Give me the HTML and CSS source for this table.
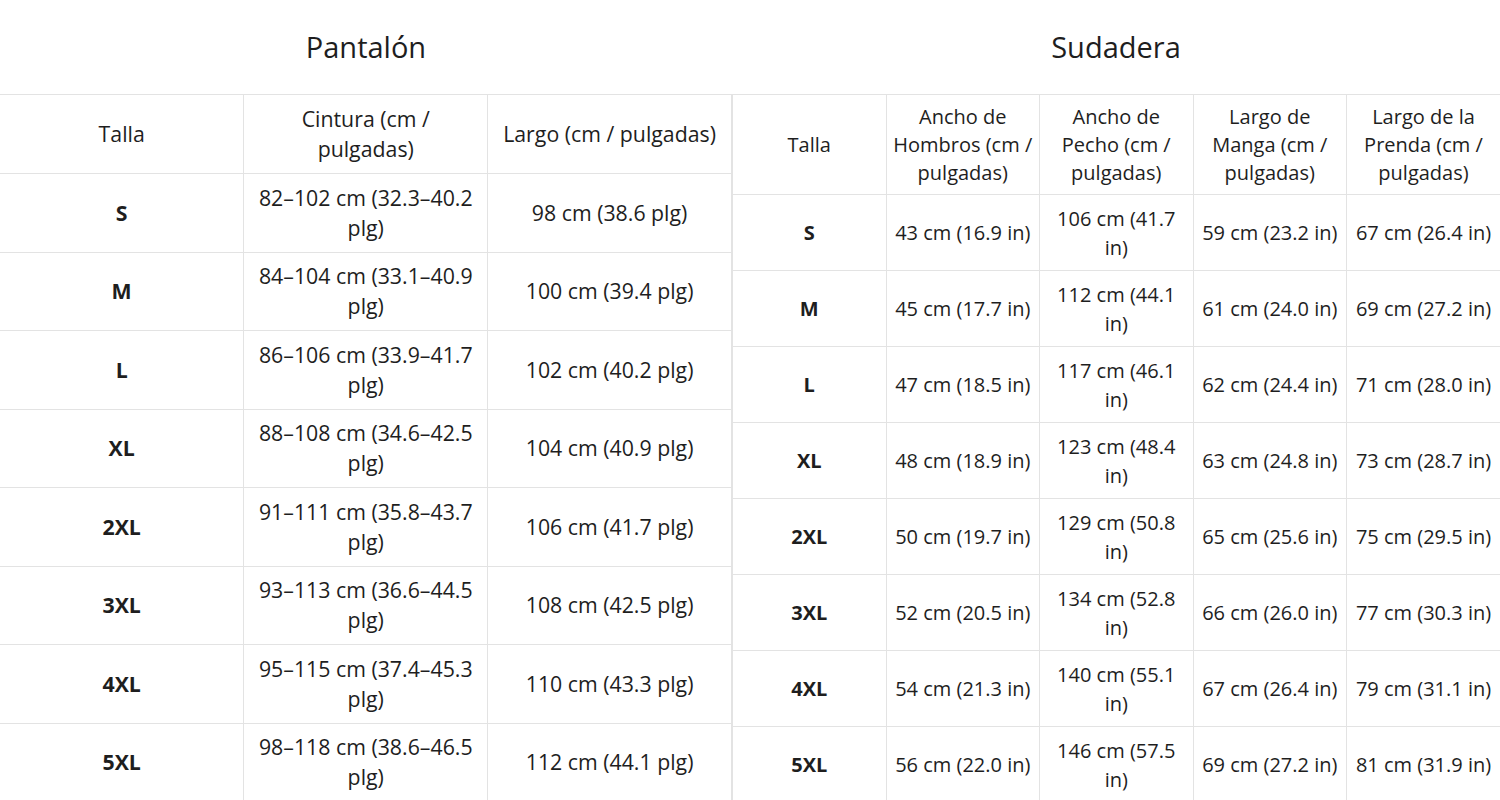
FILE: index.html
```html
<!DOCTYPE html>
<html lang="es">
<head>
<meta charset="utf-8">
<link rel="stylesheet" href="styles.css">
</head>
<body>
<div class="wrap">
  <section class="block block-left">
    <h2 class="title">Pantalón</h2>
    <table class="chart chart-left">
      <thead>
        <tr><th>Talla</th><th>Cintura (cm / pulgadas)</th><th>Largo (cm / pulgadas)</th></tr>
      </thead>
      <tbody>
        <tr><td class="size">S</td><td>82–102 cm (32.3–40.2 plg)</td><td>98 cm (38.6 plg)</td></tr>
        <tr><td class="size">M</td><td>84–104 cm (33.1–40.9 plg)</td><td>100 cm (39.4 plg)</td></tr>
        <tr><td class="size">L</td><td>86–106 cm (33.9–41.7 plg)</td><td>102 cm (40.2 plg)</td></tr>
        <tr><td class="size">XL</td><td>88–108 cm (34.6–42.5 plg)</td><td>104 cm (40.9 plg)</td></tr>
        <tr><td class="size">2XL</td><td>91–111 cm (35.8–43.7 plg)</td><td>106 cm (41.7 plg)</td></tr>
        <tr><td class="size">3XL</td><td>93–113 cm (36.6–44.5 plg)</td><td>108 cm (42.5 plg)</td></tr>
        <tr><td class="size">4XL</td><td>95–115 cm (37.4–45.3 plg)</td><td>110 cm (43.3 plg)</td></tr>
        <tr><td class="size">5XL</td><td>98–118 cm (38.6–46.5 plg)</td><td>112 cm (44.1 plg)</td></tr>
      </tbody>
    </table>
  </section>
  <section class="block block-right">
    <h2 class="title">Sudadera</h2>
    <table class="chart chart-right">
      <thead>
        <tr><th>Talla</th><th>Ancho de Hombros (cm / pulgadas)</th><th>Ancho de Pecho (cm / pulgadas)</th><th>Largo de Manga (cm / pulgadas)</th><th>Largo de la Prenda (cm / pulgadas)</th></tr>
      </thead>
      <tbody>
        <tr><td class="size">S</td><td>43 cm (16.9 in)</td><td>106 cm (41.7 in)</td><td>59 cm (23.2 in)</td><td>67 cm (26.4 in)</td></tr>
        <tr><td class="size">M</td><td>45 cm (17.7 in)</td><td>112 cm (44.1 in)</td><td>61 cm (24.0 in)</td><td>69 cm (27.2 in)</td></tr>
        <tr><td class="size">L</td><td>47 cm (18.5 in)</td><td>117 cm (46.1 in)</td><td>62 cm (24.4 in)</td><td>71 cm (28.0 in)</td></tr>
        <tr><td class="size">XL</td><td>48 cm (18.9 in)</td><td>123 cm (48.4 in)</td><td>63 cm (24.8 in)</td><td>73 cm (28.7 in)</td></tr>
        <tr><td class="size">2XL</td><td>50 cm (19.7 in)</td><td>129 cm (50.8 in)</td><td>65 cm (25.6 in)</td><td>75 cm (29.5 in)</td></tr>
        <tr><td class="size">3XL</td><td>52 cm (20.5 in)</td><td>134 cm (52.8 in)</td><td>66 cm (26.0 in)</td><td>77 cm (30.3 in)</td></tr>
        <tr><td class="size">4XL</td><td>54 cm (21.3 in)</td><td>140 cm (55.1 in)</td><td>67 cm (26.4 in)</td><td>79 cm (31.1 in)</td></tr>
        <tr><td class="size">5XL</td><td>56 cm (22.0 in)</td><td>146 cm (57.5 in)</td><td>69 cm (27.2 in)</td><td>81 cm (31.9 in)</td></tr>
      </tbody>
    </table>
  </section>
</div>
</body>
</html>
```
FILE: styles.css
```css
html, body {
  margin: 0;
  padding: 0;
  background: #fff;
}
body {
  font-family: "Open Sans", "Noto Sans", sans-serif;
  color: #1e1e1e;
}
.wrap {
  display: flex;
  width: 1500px;
}
.block {
  display: flex;
  flex-direction: column;
}
.block-left { width: 732px; }
.block-right { width: 768px; }
.title {
  margin: 0;
  height: 94px;
  display: flex;
  align-items: center;
  justify-content: center;
  font-weight: 400;
  font-size: 29px;
  padding-bottom: 2px;
  box-sizing: border-box;
}
.chart {
  width: 100%;
  border-collapse: collapse;
  table-layout: fixed;
}
.chart th, .chart td {
  border: 1px solid #e3e3e3;
  text-align: center;
  vertical-align: middle;
  font-weight: 400;
}
.chart td.size { font-weight: 700; }
.chart-left {
  font-size: 21.3px;
  line-height: 30px;
}
.chart-left th, .chart-left td { padding: 4px 12px; }
.chart-left thead tr { height: 79px; }
.chart-left tbody tr { height: 78.5px; }
.chart-left th:first-child, .chart-left td:first-child { border-left: none; }
.chart-right {
  font-size: 20px;
  line-height: 29px;
}
.chart-right th, .chart-right td { padding: 4px 6px; }
.chart-right thead th { height: 91px; line-height: 28px; }
.chart-right tbody td { height: 67px; }
.chart-right th:last-child, .chart-right td:last-child { border-right: none; }
```
